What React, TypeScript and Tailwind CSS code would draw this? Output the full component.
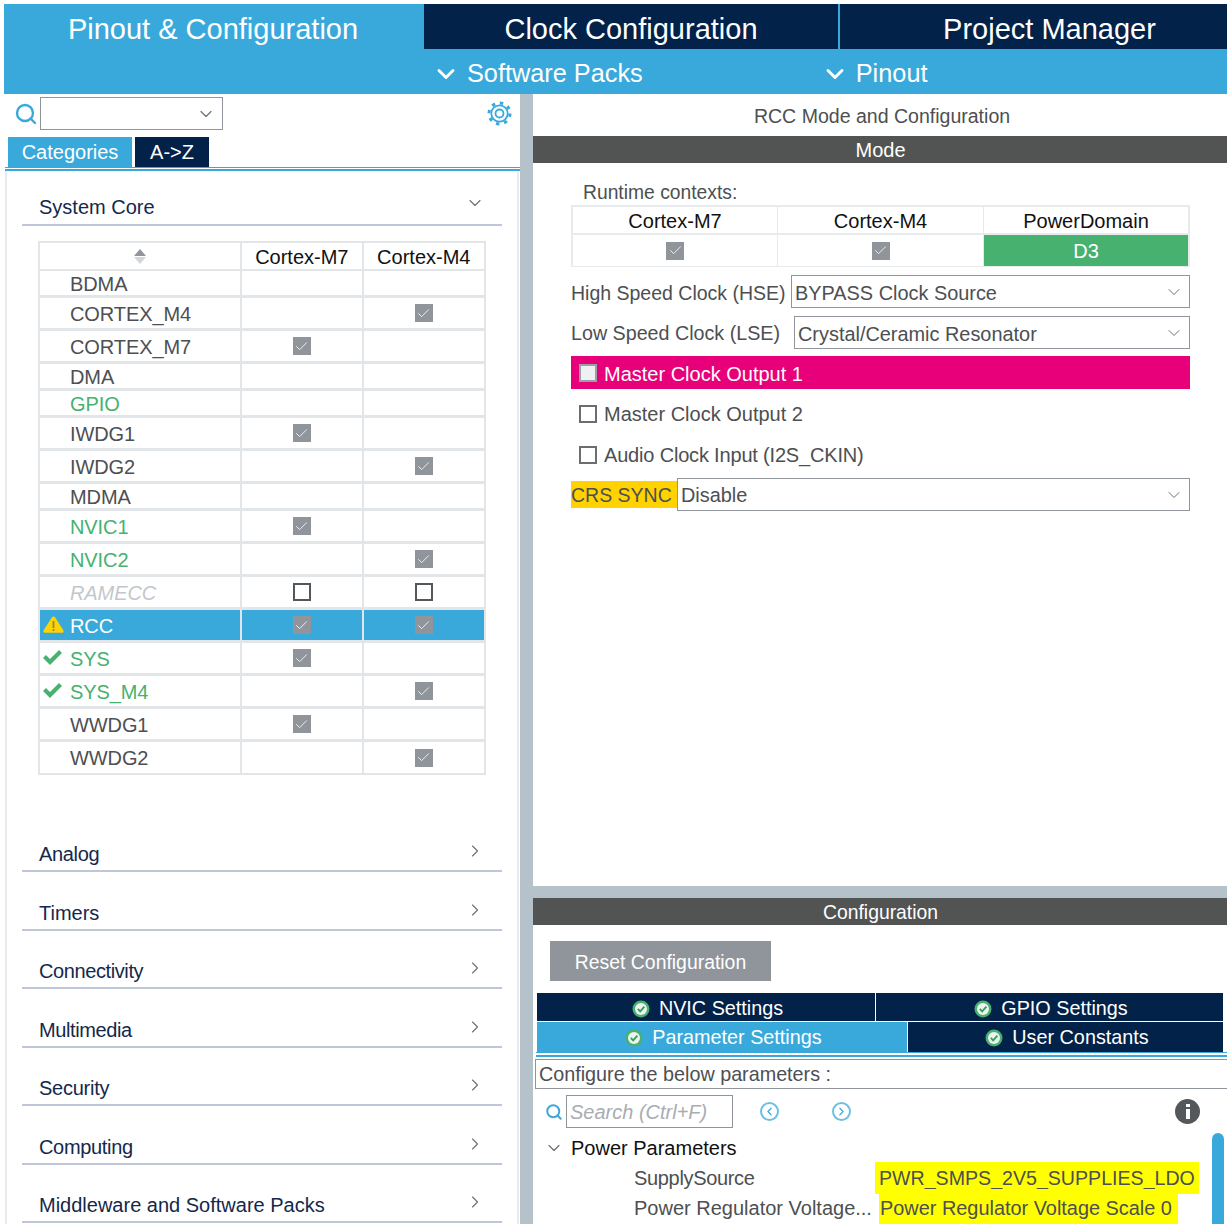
import { ChevronDown, ChevronLeft, ChevronRight, Check, Search } from "lucide-react";

const font = { fontFamily: '"Liberation Sans", Arial, sans-serif' };

interface Row {
  name: string;
  h: number;
  m7?: boolean;
  m4?: boolean;
  tone?: "green" | "muted" | "selected";
  mark?: "ok" | "warn";
  empty?: boolean;
}

const rows: Row[] = [
  { name: "BDMA", h: 27 },
  { name: "CORTEX_M4", h: 33, m4: true },
  { name: "CORTEX_M7", h: 33, m7: true },
  { name: "DMA", h: 27 },
  { name: "GPIO", h: 27, tone: "green" },
  { name: "IWDG1", h: 33, m7: true },
  { name: "IWDG2", h: 33, m4: true },
  { name: "MDMA", h: 27 },
  { name: "NVIC1", h: 33, m7: true, tone: "green" },
  { name: "NVIC2", h: 33, m4: true, tone: "green" },
  { name: "RAMECC", h: 33, tone: "muted", empty: true },
  { name: "RCC", h: 33, m7: true, m4: true, tone: "selected", mark: "warn" },
  { name: "SYS", h: 33, m7: true, tone: "green", mark: "ok" },
  { name: "SYS_M4", h: 33, m4: true, tone: "green", mark: "ok" },
  { name: "WWDG1", h: 33, m7: true },
  { name: "WWDG2", h: 31, m4: true },
];

const categories = [
  { name: "Analog", cls: "tracking-[-0.33px]" },
  { name: "Timers", cls: "" },
  { name: "Connectivity", cls: "tracking-[-0.4px]" },
  { name: "Multimedia", cls: "tracking-[-0.4px]" },
  { name: "Security", cls: "tracking-[-0.25px]" },
  { name: "Computing", cls: "tracking-[-0.33px]" },
  { name: "Middleware and Software Packs", cls: "" },
];

function CheckedBox() {
  return (
    <span className="flex h-[18px] w-[18px] items-center justify-center bg-[#8f959b]">
      <Check size={15} strokeWidth={1.5} className="text-[#f0f2f3]" />
    </span>
  );
}

function EmptyBox() {
  return <span className="block h-[18px] w-[18px] border-2 border-[#55585a] bg-white" />;
}

function OkMark() {
  return (
    <svg width="19" height="16" viewBox="0 0 19 16" className="ml-[3px]">
      <path d="M1.5 7.5 L7 13 L17.5 2.5" fill="none" stroke="#47b16f" strokeWidth="4.2" />
    </svg>
  );
}

function WarnMark() {
  return (
    <svg width="21" height="17" viewBox="0 0 21 17" className="ml-[3px]">
      <path d="M10.5 0.5 C11.5 0.5 12 1 12.5 2 L20.5 14.5 C21 16 20 16.8 19 16.8 L2 16.8 C1 16.8 0 16 0.5 14.5 L8.5 2 C9 1 9.5 0.5 10.5 0.5 Z" fill="#ffd200" />
      <rect x="9.6" y="5" width="1.8" height="7" fill="#8f8a55" />
      <rect x="9.6" y="13" width="1.8" height="2" fill="#8f8a55" />
    </svg>
  );
}

function GearIcon() {
  return (
    <svg width="25" height="25" viewBox="0 0 25 25" className="mt-[4px]" fill="none" stroke="#39a9dc">
      <circle cx="12.5" cy="12.5" r="10.5" strokeWidth="3" strokeDasharray="3.4 4.85" />
      <circle cx="12.5" cy="12.5" r="8.2" strokeWidth="1.8" />
      <circle cx="12.5" cy="12.5" r="4" strokeWidth="1.8" />
    </svg>
  );
}

function TabCheck() {
  return (
    <svg width="18" height="18" viewBox="0 0 18 18">
      <circle cx="9" cy="9" r="8.5" fill="#47b16f" />
      <circle cx="9" cy="9" r="6" fill="#eef3f0" />
      <path d="M5.8 8.8 L8.2 11.4 L12.4 6.6" fill="none" stroke="#2f9e5f" strokeWidth="1.8" />
    </svg>
  );
}

function PeripheralTable() {
  return (
    <div className="ml-[16px] mt-[15px] w-[448px] border-2 border-[#e3e6e9] bg-[#e3e6e9]">
      <div className="flex h-[28px] gap-[2px] border-b-2 border-[#e3e6e9] text-[20px] leading-[26px] text-[#111111]">
        <div className="flex w-[201px] flex-col items-center justify-center gap-[1px] bg-white">
          <span className="h-0 w-0 border-x-[6px] border-b-[7px] border-x-transparent border-b-[#8f959b]" />
          <span className="h-0 w-0 border-x-[6px] border-t-[7px] border-x-transparent border-t-[#d3d6d9]" />
        </div>
        <div className="w-[120px] bg-white pt-[1px] text-center">Cortex-M7</div>
        <div className="w-[121px] bg-white pt-[1px] text-center">Cortex-M4</div>
      </div>
      {rows.map((r) => {
        const bg = r.tone === "selected" ? "bg-[#39a9dc]" : "bg-white";
        const color =
          r.tone === "selected"
            ? "text-white"
            : r.tone === "green"
              ? "text-[#47b16f]"
              : r.tone === "muted"
                ? "text-[#c3c7cc] italic"
                : "text-[#4d4f52]";
        return (
          <div key={r.name} className="flex gap-[2px] border-b-[3px] border-[#e3e6e9] last:border-b-0" style={{ height: r.h }}>
            <div className={`relative flex w-[201px] items-center pl-[30px] text-[20px] tracking-[-0.1px] ${bg} ${color}`}>
              {r.mark && (
                <span className="absolute left-0 top-[6px]">{r.mark === "ok" ? <OkMark /> : <WarnMark />}</span>
              )}
              <span className="pt-[1px]">{r.name}</span>
            </div>
            <div className={`flex w-[120px] items-center justify-center ${bg}`}>
              {r.m7 ? <CheckedBox /> : r.empty ? <EmptyBox /> : null}
            </div>
            <div className={`flex w-[121px] items-center justify-center ${bg}`}>
              {r.m4 ? <CheckedBox /> : r.empty ? <EmptyBox /> : null}
            </div>
          </div>
        );
      })}
    </div>
  );
}

function Select({ value, width, textCls }: { value: string; width: string; textCls: string }) {
  return (
    <div className={`flex h-[33px] items-center justify-between border border-[#8f959b] bg-white pl-[3px] pr-[5px] text-[19.9px] text-[#4d4f52] ${width}`}>
      <span className={textCls}>{value}</span>
      <ChevronDown size={20} strokeWidth={1.2} className="text-[#6b6f73]" />
    </div>
  );
}

function LeftPanel() {
  return (
    <div className="w-[520px] shrink-0 bg-white">
      <div className="flex h-[43px] items-start justify-between pl-[14px] pr-[8px] pt-[3px]">
        <div className="flex items-start gap-[2px]">
          <Search size={24} strokeWidth={2.4} className="mt-[5px] text-[#39a9dc]" />
          <div className="flex h-[33px] w-[183px] items-center justify-end border border-[#8f959b] pr-[6px]">
            <ChevronDown size={20} strokeWidth={1.4} className="text-[#6b6f73]" />
          </div>
        </div>
        <GearIcon />
      </div>
      <div className="flex h-[30px] gap-[3px] pl-[8px] text-[20px] text-white">
        <div className="flex w-[124px] items-center justify-center bg-[#39a9dc]">Categories</div>
        <div className="flex w-[74px] items-center justify-center bg-[#022249]">A-&gt;Z</div>
      </div>
      <div className="ml-[5px] h-[1px] bg-[#39a9dc]" />
      <div className="ml-[5px] mt-[1px] h-[2px] bg-[#39a9dc]" />
      <div className="ml-[5px] h-[1053px] w-[514px] border-x-2 border-[#e8ebee] pl-[15px]">
        <div className="flex h-[55px] w-[480px] items-end justify-between border-b-2 border-[#bfc6d8] pb-[2px] pl-[17px] pr-[17px] text-[20px] text-[#14284b]">
          <span>System Core</span>
          <ChevronDown size={20} strokeWidth={1.3} className="mb-[9px] text-[#6b6f73]" />
        </div>
        <PeripheralTable />
        <div className="mt-[38.5px]">
          {categories.map((c) => (
            <div key={c.name} className="flex h-[58.5px] w-[480px] items-end justify-between border-b-2 border-[#bfc6d8] pb-[1px] pl-[17px] pr-[17px] text-[20px] text-[#14284b]">
              <span className={c.cls}>{c.name}</span>
              <ChevronRight size={20} strokeWidth={1.3} className="mb-[8px] text-[#6b6f73]" />
            </div>
          ))}
        </div>
      </div>
    </div>
  );
}

function ModePanel() {
  return (
    <div className="h-[792px] bg-white">
      <div className="h-[42px] pl-[3px] pt-[10px] text-center text-[19.55px] leading-[24px] text-[#4d4f52]">RCC Mode and Configuration</div>
      <div className="h-[27px] bg-[#525453] text-center text-[20px] leading-[28px] text-white">Mode</div>
      <div className="px-[38px] text-[20px] text-[#4d4f52]">
        <div className="h-[42px] pl-[12px] pt-[18px] text-[19.3px] leading-[24px]">Runtime contexts:</div>
        <div className="w-[619px] border-x-2 border-b border-t-2 border-[#e8ebee] bg-[#e8ebee] text-[#111111]">
          <div className="flex h-[26px] gap-[1px] leading-[28px]">
            <div className="w-[204px] bg-white text-center">Cortex-M7</div>
            <div className="w-[205px] bg-white text-center">Cortex-M4</div>
            <div className="flex-1 bg-white text-center">PowerDomain</div>
          </div>
          <div className="mt-[2px] flex h-[31px] gap-[1px]">
            <div className="flex w-[204px] items-center justify-center bg-white"><CheckedBox /></div>
            <div className="flex w-[205px] items-center justify-center bg-white"><CheckedBox /></div>
            <div className="flex-1 bg-[#47b16f] text-center leading-[32px] text-white">D3</div>
          </div>
        </div>
        <div className="mt-[8px] flex w-[619px] items-center justify-between">
          <span className="shrink-0 pt-[4px] text-[19.5px]">High Speed Clock (HSE)</span>
          <Select value="BYPASS Clock Source" width="w-[399px]" textCls="pt-[4px]" />
        </div>
        <div className="mt-[8px] flex w-[619px] items-center justify-between">
          <span className="shrink-0 pt-[2px] text-[19.7px]">Low Speed Clock (LSE)</span>
          <Select value="Crystal/Ceramic Resonator" width="w-[396px]" textCls="pt-[4px]" />
        </div>
        <div className="mt-[7px] flex h-[33px] w-[619px] items-center gap-[7px] bg-[#e8007a] pl-[8px] text-white">
          <span className="block h-[18px] w-[18px] border-2 border-[#9aa0a6] bg-[#eef0f2]" />
          <span className="pt-[2px]">Master Clock Output 1</span>
        </div>
        <div className="mt-[8px] flex h-[33px] items-center gap-[7px] pl-[8px]">
          <span className="block h-[18px] w-[18px] border-2 border-[#6b6e70]" />
          <span>Master Clock Output 2</span>
        </div>
        <div className="mt-[8px] flex h-[33px] items-center gap-[7px] pl-[8px]">
          <span className="block h-[18px] w-[18px] border-2 border-[#6b6e70]" />
          <span className="tracking-[-0.18px]">Audio Clock Input (I2S_CKIN)</span>
        </div>
        <div className="mt-[7px] flex w-[619px] items-start">
          <span className="mt-[3px] flex h-[27px] w-[106px] shrink-0 items-center bg-[#ffd200] pt-[2px] text-[19.5px]">CRS SYNC</span>
          <Select value="Disable" width="flex-1" textCls="pt-[2px]" />
        </div>
      </div>
    </div>
  );
}

function ConfigTab({ label, active, className }: { label: string; active?: boolean; className: string }) {
  return (
    <div className={`flex items-center justify-center gap-[9px] pl-[3px] text-[19.8px] text-white ${active ? "bg-[#39a9dc]" : "bg-[#022249]"} ${className}`}>
      <TabCheck />
      <span>{label}</span>
    </div>
  );
}

function ConfigPanel() {
  return (
    <div className="relative h-[326px] bg-white text-[20px]">
      <div className="h-[27px] bg-[#525453] text-center text-[19.35px] leading-[28px] text-white">Configuration</div>
      <div className="ml-[17px] mt-[16px] flex h-[40px] w-[221px] items-center justify-center bg-[#8f959b] pt-[4px] text-[19.4px] text-white">Reset Configuration</div>
      <div className="ml-[4px] mt-[12px] flex h-[28px] w-[686px] gap-[1px]">
        <ConfigTab label="NVIC Settings" className="w-[338px] pt-[3px]" />
        <ConfigTab label="GPIO Settings" className="flex-1 pt-[3px]" />
      </div>
      <div className="ml-[4px] mt-[1px] flex h-[30px] w-[686px] gap-[1px]">
        <ConfigTab label="Parameter Settings" active className="w-[370px] pt-[1px]" />
        <ConfigTab label="User Constants" className="flex-1 pt-[1px]" />
      </div>
      <div className="ml-[3px] h-[1px] bg-[#39a9dc]" />
      <div className="ml-[3px] mt-[2px] h-[2px] bg-[#39a9dc]" />
      <div className="ml-[2px] mt-[2px] flex h-[30px] items-center border border-[#8f959b] pl-[3px] pt-[2px] text-[19.75px] text-[#4d4f52]">Configure the below parameters :</div>
      <div className="mt-[6px] flex h-[33px] items-center pl-[12px] pr-[28px]">
        <Search size={18} strokeWidth={2.6} className="text-[#39a9dc]" />
        <div className="ml-[3px] flex h-[33px] w-[167px] items-center border border-[#8f959b] pl-[3px] italic text-[#a9adb1]">Search (Ctrl+F)</div>
        <span className="ml-[27px] flex h-[19px] w-[19px] items-center justify-center rounded-full border-2 border-[#6cc0e6]">
          <ChevronLeft size={13} strokeWidth={2.2} className="text-[#39a9dc]" />
        </span>
        <span className="ml-[53px] flex h-[19px] w-[19px] items-center justify-center rounded-full border-2 border-[#6cc0e6]">
          <ChevronRight size={13} strokeWidth={2.2} className="text-[#39a9dc]" />
        </span>
        <span className="ml-auto flex h-[25px] w-[25px] flex-col items-center justify-center gap-[2px] rounded-full bg-[#55585a]">
          <span className="block h-[3px] w-[4px] bg-white" />
          <span className="block h-[10px] w-[4px] bg-white" />
        </span>
      </div>
      <div className="mt-[5px] flex h-[30px] items-center pl-[11px] text-[#111111]">
        <ChevronDown size={20} strokeWidth={1.4} className="text-[#6b6f73]" />
        <span className="ml-[7px]">Power Parameters</span>
      </div>
      <div className="flex h-[30px] items-center pl-[101px] text-[#4d4f52]">
        <span className="w-[245px] tracking-[-0.33px]">SupplySource</span>
        <span className="-ml-[4px] bg-[#ffff00] px-[4px] pt-[2px] text-[19.6px]">PWR_SMPS_2V5_SUPPLIES_LDO</span>
      </div>
      <div className="flex h-[30px] items-center pl-[101px] text-[#4d4f52]">
        <span className="w-[245px] whitespace-nowrap">Power Regulator Voltage...</span>
        <span className="bg-[#ffff00] pb-[3px] pl-[1px] pr-[6px] pt-[5px] text-[19.9px]">Power Regulator Voltage Scale 0</span>
      </div>
      <div className="absolute bottom-0 right-[4px] h-[91px] w-[12px] rounded-t-[6px] bg-[#39a9dc]" />
    </div>
  );
}

export default function App() {
  return (
    <div className="h-[1224px] w-[1227px] overflow-hidden bg-white pt-[4px]" style={font}>
      <div className="ml-[4px] bg-[#39a9dc]">
        <div className="flex h-[45px] text-[29px] leading-[50px] text-white">
          <div className="w-[418px] text-center">Pinout &amp; Configuration</div>
          <div className="ml-[2px] w-[414px] bg-[#022249] text-center">Clock Configuration</div>
          <div className="ml-[2px] flex-1 bg-[#022249] pl-[32px] text-center">Project Manager</div>
        </div>
        <div className="flex h-[45px] items-center pt-[4px] text-[25.3px] text-white">
          <ChevronDown size={28} strokeWidth={2.5} className="ml-[428px]" />
          <span className="ml-[7px]">Software Packs</span>
          <ChevronDown size={28} strokeWidth={2.5} className="ml-[178px]" />
          <span className="ml-[7px]">Pinout</span>
        </div>
      </div>
      <div className="flex">
        <LeftPanel />
        <div className="w-[13px] shrink-0 bg-[#b5c2c9]" />
        <div className="flex-1 bg-[#b5c2c9]">
          <ModePanel />
          <div className="h-[12px]" />
          <ConfigPanel />
        </div>
      </div>
    </div>
  );
}
